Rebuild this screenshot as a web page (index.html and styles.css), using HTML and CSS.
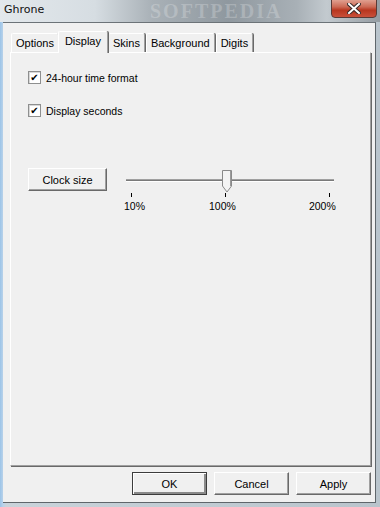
FILE: index.html
```html
<!DOCTYPE html>
<html lang="en">
<head>
    <meta charset="UTF-8">
    <meta name="viewport" content="width=device-width, initial-scale=1.0">
    <title>Ghrone</title>
    <link rel="stylesheet" href="styles.css">
</head>
<body>
    <div class="window">
        <div class="titlebar">
            <span class="title">Ghrone</span>
            <span class="watermark">SOFTPEDIA</span>
            <div class="close">
                <svg width="14" height="11" viewBox="0 0 14 11">
                    <path d="M2 1 L12 10 M12 1 L2 10" stroke="#3a2a28" stroke-width="4" stroke-linecap="square"/>
                    <path d="M2 1 L12 10 M12 1 L2 10" stroke="#ffffff" stroke-width="2" stroke-linecap="square"/>
                </svg>
            </div>
        </div>
        <div class="client">
            <div class="tabs">
                <div class="tab">Options</div>
                <div class="tab active">Display</div>
                <div class="tab">Skins</div>
                <div class="tab">Background</div>
                <div class="tab">Digits</div>
            </div>
            <div class="panel">
                <label class="check">
                    <span class="box">&#10004;</span>
                    24-hour time format
                </label>
                <label class="check">
                    <span class="box">&#10004;</span>
                    Display seconds
                </label>
                <div class="size-row">
                    <button class="btn clock-btn">Clock size</button>
                    <div class="slider">
                        <div class="track"></div>
                        <div class="thumb">
                            <svg width="10" height="23" viewBox="0 0 10 23">
                                <path d="M0.5 0.5 H9.5 V16 L5 22 L0.5 16 Z" fill="#f4f4f4" stroke="#8a8a8a"/>
                                <path d="M8.5 1 V16" stroke="#9a9a9a"/>
                            </svg>
                        </div>
                        <div class="ticks">
                            <span class="tick t1"></span>
                            <span class="tick t2"></span>
                            <span class="tick t3"></span>
                        </div>
                        <div class="labels">
                            <span class="lbl l1">10%</span>
                            <span class="lbl l2">100%</span>
                            <span class="lbl l3">200%</span>
                        </div>
                    </div>
                </div>
            </div>
            <div class="actions">
                <button class="btn default">OK</button>
                <button class="btn">Cancel</button>
                <button class="btn">Apply</button>
            </div>
        </div>
    </div>
</body>
</html>
```

FILE: styles.css
```css
body {
    margin: 0;
    font-family: "Liberation Sans", Arial, sans-serif;
    font-size: 10.5px;
    color: #000;
}
.window {
    width: 380px;
    height: 507px;
    display: flex;
    flex-direction: column;
    background: linear-gradient(90deg, #9cc4e8 0px, #b8d2ea 3px, #c9d3da 6px, #b9c4cc 100%);
    overflow: hidden;
}
.titlebar {
    height: 22px;
    position: relative;
    background: linear-gradient(90deg, #e3e8ec 0%, #d6dde2 25%, #a9b1b7 40%, #8f989f 60%, #a8b0b6 78%, #c3cacf 86%, #949ca2 100%);
    overflow: hidden;
}
.title {
    position: absolute;
    left: 4px;
    top: 3px;
    font-family: "DejaVu Sans", sans-serif;
    font-size: 11px;
    color: #111;
}
.watermark {
    position: absolute;
    left: 150px;
    top: 1px;
    line-height: 20px;
    font-family: "Liberation Serif", serif;
    font-weight: bold;
    font-size: 20px;
    letter-spacing: 2px;
    color: rgba(255, 255, 255, 0.22);
}
.close {
    position: absolute;
    left: 331px;
    top: -1px;
    width: 44px;
    height: 17px;
    border: 1px solid #5a3a36;
    border-radius: 0 0 4px 4px;
    background: linear-gradient(#e0a090 0%, #cc6a55 40%, #b8361f 60%, #c9503a 100%);
    display: flex;
    align-items: center;
    justify-content: center;
}
.client {
    flex: 1;
    margin: 0 4px 4px 3px;
    background: #f0f0f0;
    border-top: 1px solid #6c7378;
    border-right: 1px solid #5f666b;
    border-bottom: 1px solid #5f666b;
    display: flex;
    flex-direction: column;
    padding: 8px 4px 0 7px;
}
.tabs {
    display: flex;
    align-items: flex-end;
    height: 21px;
    padding-left: 1px;
    position: relative;
    z-index: 1;
    font-size: 11px;
}
.tab {
    height: 18px;
    line-height: 18px;
    padding: 0 4px;
    border-top: 1px solid #ffffff;
    border-left: 1px solid #ffffff;
    border-right: 1px solid #a0a0a0;
    box-shadow: 1px 0 0 #696969;
    border-radius: 2px 2px 0 0;
    margin-right: 1px;
    background: #f0f0f0;
}
.tab.active {
    height: 21px;
    line-height: 18px;
    margin: 0 -1px -1px -2px;
    padding: 0 6px;
    position: relative;
}
.tab.active + .tab {
    margin-left: 1px;
}
.panel {
    height: 414px;
    border-top: 1px solid #ffffff;
    border-left: 1px solid #ffffff;
    border-right: 1px solid #a0a0a0;
    border-bottom: 1px solid #a0a0a0;
    box-shadow: 1px 1px 0 #696969;
    padding: 18px 0 0 17px;
    box-sizing: border-box;
}
.check {
    display: flex;
    align-items: center;
    gap: 5px;
    height: 13px;
    margin-bottom: 20px;
}
.box {
    width: 11px;
    height: 11px;
    border: 1px solid #8e8f8f;
    background: #fff;
    box-shadow: inset 1px 1px 0 #d8d8d8;
    font-size: 10px;
    line-height: 11px;
    text-align: center;
    font-family: "DejaVu Sans", sans-serif;
    font-weight: bold;
}
.size-row {
    display: flex;
    align-items: flex-start;
    margin-top: 51px;
}
.btn {
    font-family: "Liberation Sans", Arial, sans-serif;
    font-size: 11px;
    color: #000;
    background: #f0f0f0;
    border: 1px solid;
    border-color: #ffffff #696969 #696969 #ffffff;
    box-shadow: inset -1px -1px 0 #a0a0a0;
    padding: 0;
    height: 23px;
    width: 75px;
}
.clock-btn {
    width: 79px;
    height: 23px;
}
.slider {
    position: relative;
    width: 208px;
    height: 46px;
    margin-left: 19px;
}
.track {
    position: absolute;
    left: 0;
    right: 0;
    top: 11px;
    height: 1px;
    border-top: 1px solid #a0a0a0;
    border-bottom: 1px solid #ffffff;
    background: #7a7a7a;
}
.thumb {
    position: absolute;
    left: 96px;
    top: 2px;
    line-height: 0;
}
.ticks {
    position: absolute;
    left: 0;
    right: 0;
    top: 25px;
    height: 4px;
}
.tick {
    position: absolute;
    top: 0;
    width: 1px;
    height: 4px;
    background: #000;
}
.t1 { left: 5px; }
.t2 { left: 99px; }
.t3 { left: 203px; }
.labels {
    position: absolute;
    left: 0;
    right: 0;
    top: 32px;
    display: flex;
}
.lbl {
    display: block;
}
.l1 { margin-left: -2px; }
.l2 { margin-left: 64px; }
.l3 { margin-left: 73px; }
.actions {
    display: flex;
    justify-content: flex-end;
    gap: 7px;
    padding: 6px 0 0 0;
}
.btn.default {
    border: 1px solid #3c3c3c;
    box-shadow: inset 1px 1px 0 #ffffff, inset -2px -2px 0 #8a8a8a;
}
```
